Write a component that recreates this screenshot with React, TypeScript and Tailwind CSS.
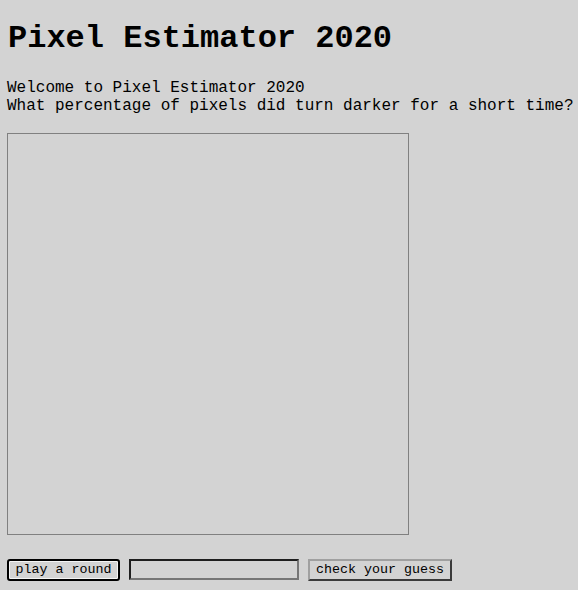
import React from 'react'

export default function App() {
  return (
    <div className="min-h-screen bg-[#d3d3d3] px-[7px] pt-[21px] font-['Liberation_Mono',monospace] text-black">
      <h1 className="pl-px text-[32px] font-bold leading-[36px]">Pixel Estimator 2020</h1>

      <div className="mt-[22px] whitespace-nowrap text-[16px] leading-[18px]">
        Welcome to Pixel Estimator 2020
        <br />
        What percentage of pixels did turn darker for a short time?
      </div>

      {/* game field */}
      <div className="mt-[18px] h-[402px] w-[402px] border border-[#808080]" />

      <div className="mt-[24px] flex items-start">
        <button className="h-[22px] w-[113px] rounded-[3px] border-2 border-black bg-[#d3d3d3] text-[13.33px] leading-none shadow-[inset_0_0_0_1px_#f4f4f4]">
          play a round
        </button>
        <input
          type="text"
          className="ml-[9px] h-[21px] w-[170px] border-2 border-t-[#1e1e1e] border-l-[#1e1e1e] border-r-[#767676] border-b-[#767676] bg-[#d3d3d3] px-1 text-[13.33px] outline-none"
        />
        <button className="ml-[9px] h-[22px] w-[144px] border-2 border-t-[#a0a0a0] border-l-[#a0a0a0] border-r-[#3a3a3a] border-b-[#3a3a3a] bg-[#d3d3d3] text-[13.33px] leading-none">
          check your guess
        </button>
      </div>
    </div>
  )
}
